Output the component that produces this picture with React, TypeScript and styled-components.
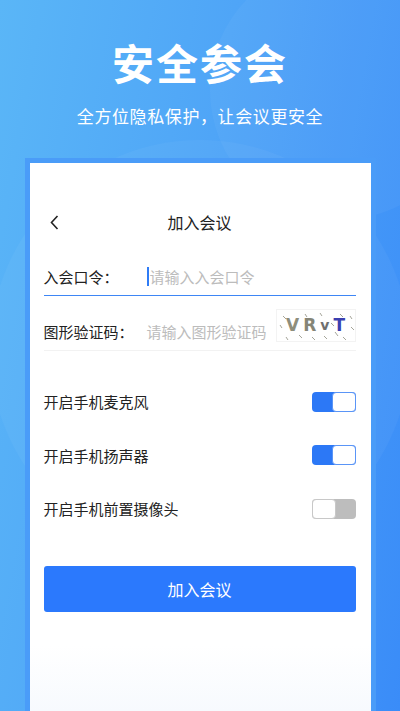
import React, { useState } from 'react';
import styled, { createGlobalStyle } from 'styled-components';

const GlobalStyle = createGlobalStyle`
  html, body {
    margin: 0;
    padding: 0;
  }
  body {
    font-family: "Noto Sans CJK SC", "Noto Sans", sans-serif;
  }
`;

const Page = styled.div`
  position: relative;
  width: 400px;
  height: 711px;
  overflow: hidden;
  display: flex;
  flex-direction: column;
  align-items: center;
  background: linear-gradient(100deg, #5ab6f7 0%, #4fa5f7 45%, #3a8cf8 100%);
`;

const Halo = styled.div`
  position: absolute;
  border-radius: 50%;
  background: rgba(255, 255, 255, 0.04);
`;

const Hero = styled.header`
  position: relative;
  display: flex;
  flex-direction: column;
  align-items: center;
  padding-top: 31px;
  color: #fff;
`;

const Title = styled.h1`
  margin: 0;
  font-size: 42px;
  line-height: 62px;
  font-weight: 700;
  letter-spacing: 2px;
`;

const Subtitle = styled.p`
  margin: 11px 0 0;
  font-size: 17px;
  line-height: 24px;
  letter-spacing: 0.6px;
`;

const Frame = styled.section`
  position: relative;
  margin-top: 30px;
  width: 351px;
  flex: 1;
  box-sizing: border-box;
  border: 5px solid #4a9cf8;
  border-bottom: none;
  display: flex;
`;

const Card = styled.div`
  flex: 1;
  background: linear-gradient(180deg, #ffffff 0%, #ffffff 88%, #f7fafe 100%);
  display: flex;
  flex-direction: column;
  padding: 0 15px 0 14px;
`;

const NavBar = styled.div`
  position: relative;
  height: 40px;
  margin-top: 39px;
  display: flex;
  align-items: center;
  justify-content: center;
`;

const Back = styled.svg`
  position: absolute;
  left: 6px;
  top: 13px;
`;

const NavTitle = styled.span`
  font-size: 16px;
  color: #222;
`;

const Field = styled.div<{ $active?: boolean }>`
  display: flex;
  align-items: center;
  height: 38px;
  margin-top: ${(p) => (p.$active ? '15px' : '16px')};
  border-bottom: 1px solid ${(p) => (p.$active ? '#3e86f5' : '#f2f2f2')};
`;

const Label = styled.span`
  width: 103px;
  font-size: 15px;
  color: #222;
  flex-shrink: 0;
`;

const Cursor = styled.span`
  width: 2px;
  height: 19px;
  background: #2f7cf6;
  margin-right: 1px;
`;

const Placeholder = styled.span`
  flex: 1;
  font-size: 15px;
  color: #bcbcbc;
  white-space: nowrap;
`;

const Captcha = styled.div`
  width: 80px;
  height: 33px;
  box-sizing: border-box;
  border: 1px solid #f3f3f3;
  position: relative;
  display: flex;
  align-items: center;
  justify-content: center;
  gap: 4px;
  font-family: "DejaVu Sans", sans-serif;
  font-weight: 700;
  margin-bottom: 6px;
  margin-top: -6px;
`;

const CaptchaChar = styled.span<{ $color: string; $size: number }>`
  color: ${(p) => p.$color};
  font-size: ${(p) => p.$size}px;
  position: relative;
`;

const Noise = styled.svg`
  position: absolute;
  left: 0;
  top: 0;
`;

const Options = styled.div`
  display: flex;
  flex-direction: column;
  margin-top: 24px;
`;

const OptionRow = styled.div`
  display: flex;
  align-items: center;
  justify-content: space-between;
  height: 53.5px;
`;

const OptionLabel = styled.span`
  font-size: 15px;
  color: #222;
`;

const Toggle = styled.div<{ $on: boolean }>`
  width: 44px;
  height: 20px;
  box-sizing: border-box;
  border-radius: 4px;
  display: flex;
  background: ${(p) => (p.$on ? '#2c78f6' : '#bdbdbd')};
  cursor: pointer;
`;

const Knob = styled.div<{ $on: boolean }>`
  width: 24px;
  height: 20px;
  box-sizing: border-box;
  border-radius: 4px;
  background: #fff;
  border: 1px solid ${(p) => (p.$on ? '#5a95f7' : '#c8c8c8')};
  margin-left: ${(p) => (p.$on ? 'auto' : '0')};
`;

const JoinButton = styled.button`
  margin-top: 30px;
  height: 46px;
  border: none;
  border-radius: 3px;
  background: #2b79fd;
  color: #fff;
  font-family: inherit;
  font-size: 16px;
  cursor: pointer;
`;

const noise = [
  [6, 6, 9, 9], [14, 18, 17, 21], [22, 25, 25, 28], [9, 27, 11, 30], [35, 27, 38, 30],
  [47, 26, 50, 29], [58, 22, 61, 26], [66, 27, 69, 30], [73, 6, 75, 9], [74, 17, 77, 20],
  [3, 15, 5, 18], [28, 4, 30, 7], [43, 3, 45, 6], [63, 4, 66, 7], [54, 13, 57, 16],
];

const options = [
  { label: '开启手机麦克风', on: true },
  { label: '开启手机扬声器', on: true },
  { label: '开启手机前置摄像头', on: false },
];

const App = (): JSX.Element => {
  const [state, setState] = useState(options.map((o) => o.on));

  return (
    <Page>
      <GlobalStyle />
      <Halo style={{ width: 260, height: 260, left: 210, top: -40 }} />
      <Halo style={{ width: 420, height: 420, left: -10, top: 140 }} />
      <Hero>
        <Title>安全参会</Title>
        <Subtitle>全方位隐私保护，让会议更安全</Subtitle>
      </Hero>
      <Frame>
        <Card>
          <NavBar>
            <Back width="9" height="15" viewBox="0 0 9 15">
              <path d="M7.5 1 L1.5 7.5 L7.5 14" fill="none" stroke="#222" strokeWidth="1.6" />
            </Back>
            <NavTitle>加入会议</NavTitle>
          </NavBar>
          <Field $active>
            <Label>入会口令：</Label>
            <Cursor />
            <Placeholder>请输入入会口令</Placeholder>
          </Field>
          <Field>
            <Label>图形验证码：</Label>
            <Placeholder>请输入图形验证码</Placeholder>
            <Captcha>
              <Noise width="80" height="33" viewBox="0 0 80 33">
                {noise.map(([x1, y1, x2, y2], i) => (
                  <line key={i} x1={x1} y1={y1} x2={x2} y2={y2} stroke="#a5a59a" strokeWidth="1" />
                ))}
              </Noise>
              <CaptchaChar $color="#8e8e7c" $size={17}>V</CaptchaChar>
              <CaptchaChar $color="#858577" $size={17}>R</CaptchaChar>
              <CaptchaChar $color="#6f6f6f" $size={14}>v</CaptchaChar>
              <CaptchaChar $color="#3b3fb0" $size={17}>T</CaptchaChar>
            </Captcha>
          </Field>
          <Options>
            {options.map((o, i) => (
              <OptionRow key={o.label}>
                <OptionLabel>{o.label}</OptionLabel>
                <Toggle
                  $on={state[i]}
                  onClick={() => setState((s) => s.map((v, j) => (j === i ? !v : v)))}
                >
                  <Knob $on={state[i]} />
                </Toggle>
              </OptionRow>
            ))}
          </Options>
          <JoinButton>加入会议</JoinButton>
        </Card>
      </Frame>
    </Page>
  );
};

export default App;
